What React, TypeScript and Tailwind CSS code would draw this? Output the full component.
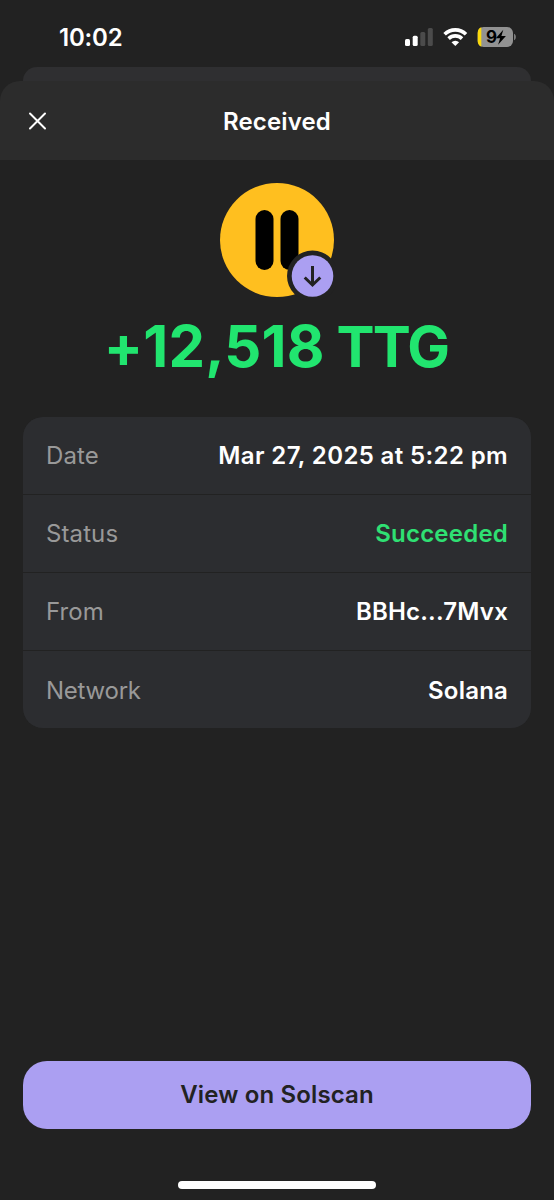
import React from 'react';

interface DetailRowProps {
  label: string;
  value: string;
  labelClassName?: string;
  valueClassName?: string;
}

const StatusBar: React.FC = () => {
  return (
    <div className="flex h-[67px] shrink-0 items-start justify-between pl-[59px] pr-[37px]">
      <span className="mt-[23px] text-[24px] leading-[30px] font-semibold tracking-[-0.2px] text-white">10:02</span>

      <div className="mt-[26px] flex items-center">
        <svg width="29" height="22" viewBox="0 0 29 22">
          <rect x="0" y="13" width="5" height="7" rx="1.5" fill="#fff" />
          <rect x="7.7" y="9.7" width="5" height="10.3" rx="1.5" fill="#fff" />
          <rect x="15.3" y="6" width="5" height="14" rx="1.5" fill="#4b4b4b" />
          <rect x="22.8" y="2" width="5" height="18" rx="1.5" fill="#4b4b4b" />
        </svg>
        <svg className="ml-[9px]" width="25" height="22" viewBox="0 0 25 22">
          <g fill="none" stroke="#fff" strokeWidth="3.6">
            <path d="M1.6 8.2a15.3 15.3 0 0 1 21.4 0" />
            <path d="M5.6 12.6a9.7 9.7 0 0 1 13.4 0" />
          </g>
          <path d="M12.3 20l-3.8-3.8a5.4 5.4 0 0 1 7.6 0z" fill="#fff" />
        </svg>
        <svg className="ml-[9px]" width="40" height="22" viewBox="0 0 40 22">
          <rect x="0.7" y="1" width="35.3" height="20" rx="6" fill="#929292" />
          <path d="M4.3 1.3C1.9 2.1.7 4.2.7 7v8c0 2.8 1.2 4.9 3.6 5.7z" fill="#fbd90b" />
          <path d="M37.2 7.8c2 .7 2 5.7 0 6.4z" fill="#929292" />
          <text x="9" y="17" fontSize="17" fontWeight="700" fill="#000">9</text>
          <path d="M26.3 3.8L18.8 12.2h4.3l-2 6.5 7.8-8.7h-4.5z" fill="#000" />
        </svg>
      </div>
    </div>
  );
};

const SheetHeader: React.FC = () => {
  return (
    <header className="grid h-[79px] shrink-0 grid-cols-[1fr_auto_1fr] items-center rounded-t-[20px] bg-[#2c2c2c] px-7">
      <button aria-label="Close" className="w-5 pt-px text-white">
        <svg width="20" height="20" viewBox="0 0 20 20">
          <path d="M2 2.5l15 15M17 2.5l-15 15" stroke="currentColor" strokeWidth="2" strokeLinecap="round" />
        </svg>
      </button>
      <h1 className="pt-[2px] text-[24px] leading-[30px] font-[560] tracking-[0.15px] text-white">Received</h1>
    </header>
  );
};

const TokenIcon: React.FC = () => {
  return (
    <svg className="shrink-0" width="118" height="118" viewBox="0 0 118 118">
      <circle cx="59" cy="58" r="57" fill="#ffbf1f" />
      <rect x="37.5" y="28" width="18" height="60" rx="9" fill="#000" />
      <rect x="62.5" y="28" width="18" height="60" rx="9" fill="#000" />
      <circle cx="94.5" cy="94" r="25.5" fill="#222" />
      <circle cx="94.5" cy="94" r="20.8" fill="#ab9ff2" />
      <path d="M94.5 84v18.5M86.7 95.5l7.8 7.5 7.8-7.5" fill="none" stroke="#222" strokeWidth="3" />
    </svg>
  );
};

const DetailRow: React.FC<DetailRowProps> = ({
  label,
  value,
  labelClassName = 'tracking-[0.1px]',
  valueClassName = 'tracking-[0.2px] text-white',
}) => {
  return (
    <div className="flex h-[76.5px] items-center justify-between bg-[#2c2d30] px-[23px] pt-[2px] text-[24px] leading-[30px]">
      <span className={`text-[#999] ${labelClassName}`}>{label}</span>
      <span className={`font-[560] ${valueClassName}`}>{value}</span>
    </div>
  );
};

const App: React.FC = () => {
  return (
    <div className="flex h-[1200px] w-[554px] flex-col overflow-hidden bg-[#222] font-['Inter',sans-serif]">
      <StatusBar />
      <div className="mx-[23px] h-[14px] shrink-0 rounded-t-[14px] bg-[#2f2f31]" />
      <SheetHeader />

      <main className="flex flex-1 flex-col items-center px-[23px] pt-[22px]">
        <TokenIcon />
        <p className="mt-[10px] mr-[2px] h-[72px] text-[58px] leading-[72px] font-bold tracking-[0.15px] whitespace-nowrap text-[#21e56f]">
          +12,518 <span className="-ml-[2px] text-[57px] tracking-[-1.8px]">TTG</span>
        </p>

        <div className="mt-[35px] flex w-full flex-col gap-[1.6px] overflow-hidden rounded-[20px] bg-[#222]">
          <DetailRow label="Date" value="Mar 27, 2025 at 5:22 pm" valueClassName="tracking-[0.38px] text-white" />
          <DetailRow label="Status" value="Succeeded" valueClassName="tracking-[0.22px] text-[#2fe073]" />
          <DetailRow label="From" value="BBHc...7Mvx" />
          <DetailRow label="Network" value="Solana" labelClassName="tracking-[-0.25px]" />
        </div>

        <button className="mt-auto h-[68px] w-full shrink-0 rounded-[24px] bg-[#ab9ff2] text-[24px] leading-[30px] font-[560] tracking-[0.15px] text-[#222]">
          View on Solscan
        </button>
      </main>

      <div className="flex h-[71px] shrink-0 items-end justify-center pb-[11px]">
        <div className="h-[8px] w-[198px] rounded-full bg-white" />
      </div>
    </div>
  );
};

export default App;
